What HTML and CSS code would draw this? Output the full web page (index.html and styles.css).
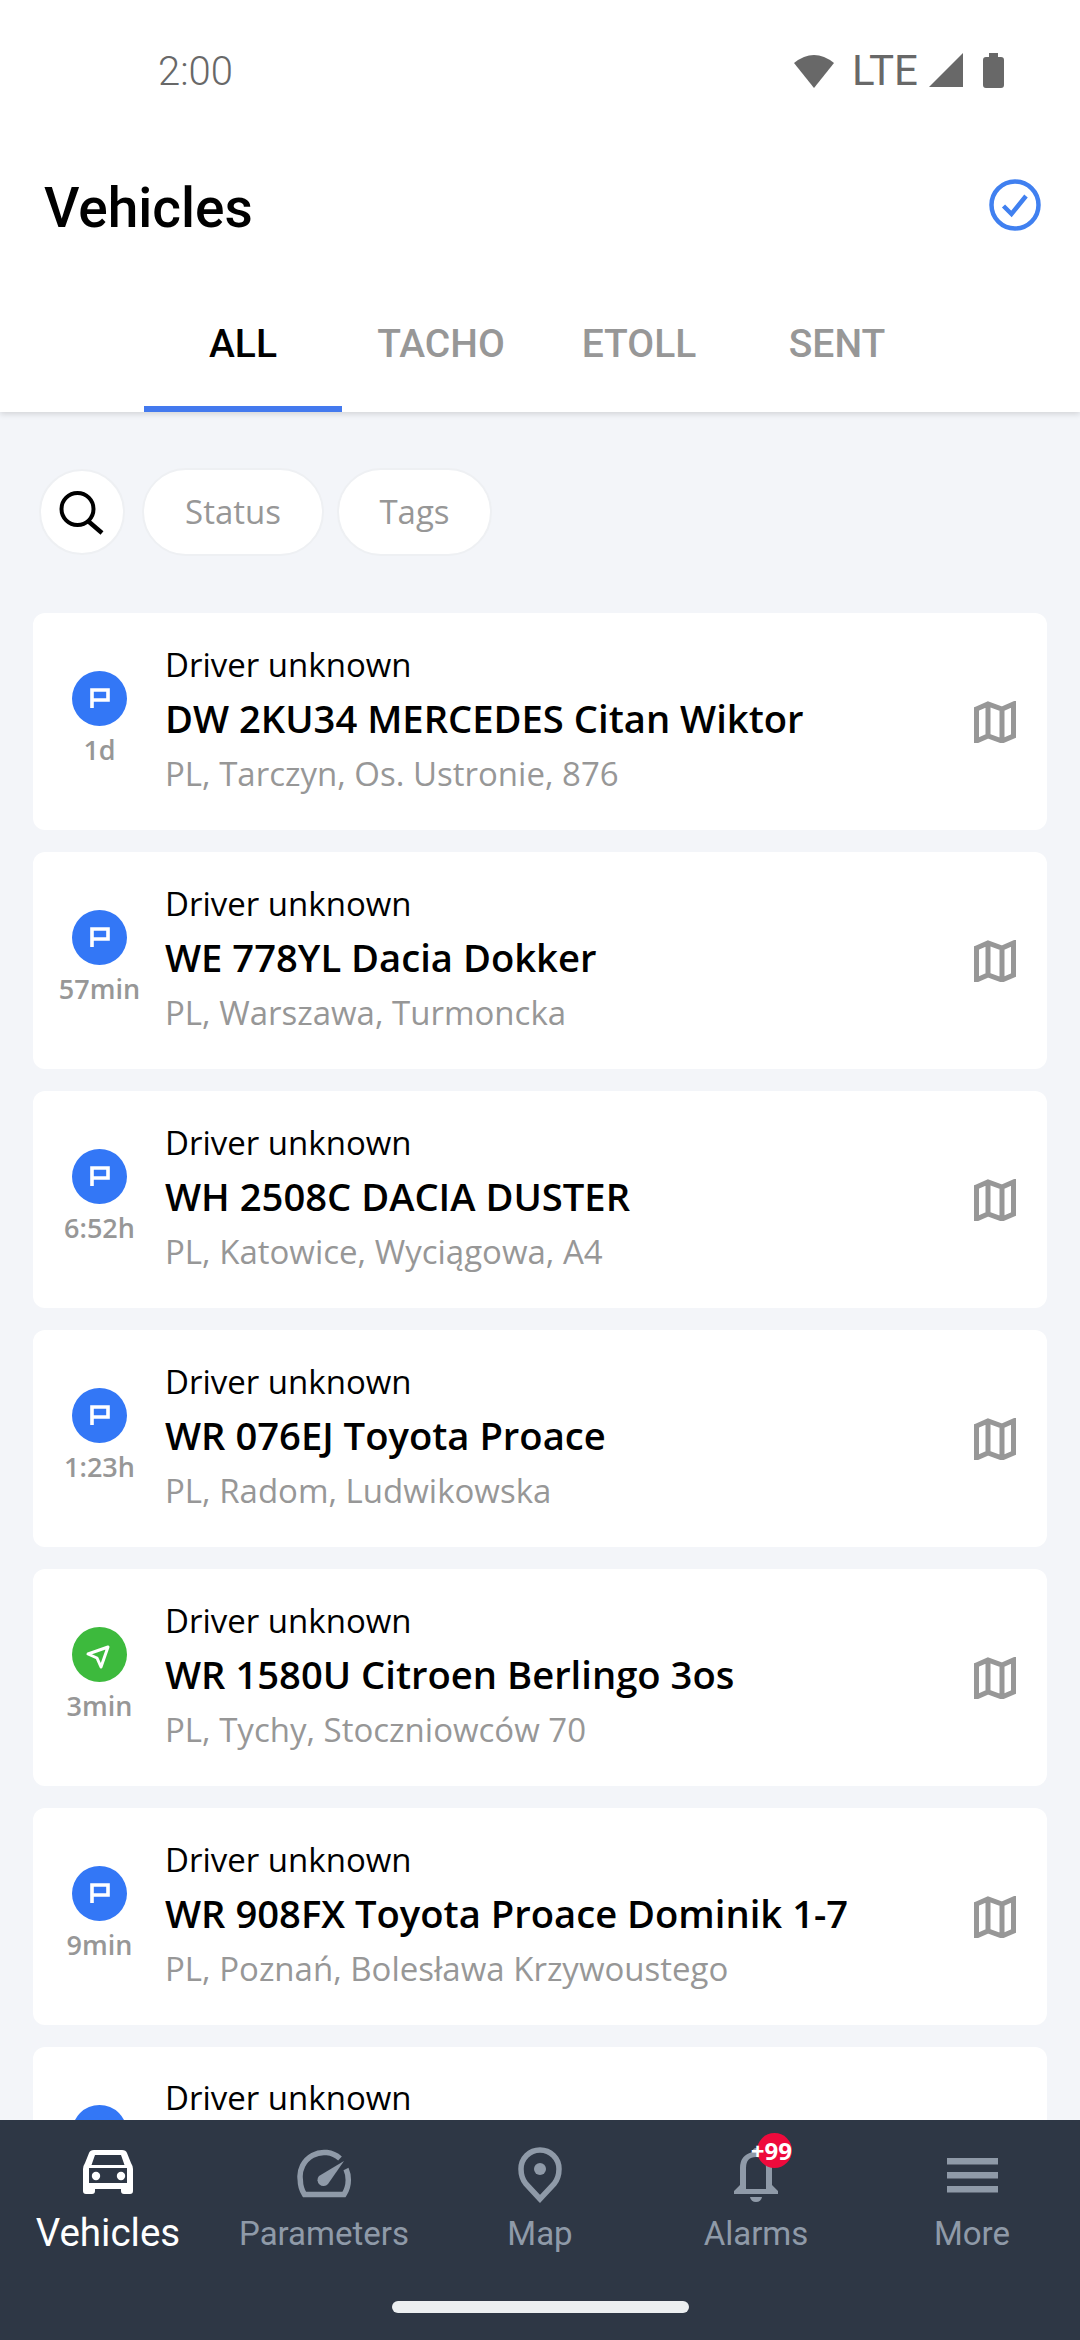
FILE: index.html
```html
<!DOCTYPE html>
<html lang="en">
<head>
  <meta charset="UTF-8" />
  <meta name="viewport" content="width=device-width, initial-scale=1.0"/>
  <title>Vehicles</title>
  <link rel="stylesheet" href="styles.css">
</head>
<body>
  <svg class="defs" width="0" height="0">
    <symbol id="map" viewBox="0 0 42 42">
      <path d="M2.5 8 L14 3 L28 8 L39.5 3 V35 L28 40 L14 35 L2.5 40 Z M14 3 V35 M28 8 V40" fill="none" stroke="#979797" stroke-width="5" stroke-linejoin="miter"/>
    </symbol>
    <symbol id="parked" viewBox="0 0 55 55">
      <circle cx="27.5" cy="27.5" r="27.5" fill="#3377f6"/>
      <path d="M20 37 V19 H36 V29 H20" fill="none" stroke="#fff" stroke-width="3.6"/>
    </symbol>
    <symbol id="moving" viewBox="0 0 55 55">
      <circle cx="27.5" cy="27.5" r="27.5" fill="#3dba3d"/>
      <path d="M16 27 L36 20 L29 40 L25 31 Z" fill="none" stroke="#fff" stroke-width="3" stroke-linejoin="round"/>
    </symbol>
  </svg>

  <div class="app">
    <div class="statusbar">
      <span class="time">2:00</span>
      <div class="status-icons">
        <svg width="42" height="35" viewBox="0 0 42 35"><path d="M1 10 Q21 -6 41 10 L21 35 Z" fill="#686868"/></svg>
        <span class="lte">LTE</span>
        <svg width="34" height="34" viewBox="0 0 34 34"><path d="M34 0 V34 H0 Z" fill="#686868"/></svg>
        <svg class="battery" width="21" height="35" viewBox="0 0 21 35"><path d="M6 0 H15 V4 H18 Q21 4 21 7 V32 Q21 35 18 35 H3 Q0 35 0 32 V7 Q0 4 3 4 H6 Z" fill="#686868"/></svg>
      </div>
    </div>

    <header class="title-row">
      <h1>Vehicles</h1>
      <svg class="select-all" width="52" height="52" viewBox="0 0 52 52">
        <circle cx="26" cy="26" r="23.5" fill="none" stroke="#4080f0" stroke-width="4.5"/>
        <path d="M14.5 27 L22.5 35 L37 17" fill="none" stroke="#4080f0" stroke-width="4.5"/>
      </svg>
    </header>

    <nav class="tabs">
      <div class="tab active">ALL</div>
      <div class="tab">TACHO</div>
      <div class="tab">ETOLL</div>
      <div class="tab">SENT</div>
    </nav>

    <main class="content">
      <div class="filters">
        <div class="search">
          <svg width="46" height="46" viewBox="0 0 46 46">
            <circle cx="18.5" cy="20" r="16" fill="none" stroke="#000" stroke-width="4"/>
            <path d="M29 32 L43 44" stroke="#000" stroke-width="4.5"/>
          </svg>
        </div>
        <div class="chip status-chip">Status</div>
        <div class="chip tags-chip">Tags</div>
      </div>

      <div class="card">
        <div class="state"><svg width="55" height="55"><use href="#parked"/></svg><span>1d</span></div>
        <div class="info">
          <div class="driver">Driver unknown</div>
          <div class="name">DW 2KU34 MERCEDES Citan Wiktor</div>
          <div class="address">PL, Tarczyn, Os. Ustronie, 876</div>
        </div>
        <svg class="map-icon" width="42" height="42"><use href="#map"/></svg>
      </div>

      <div class="card">
        <div class="state"><svg width="55" height="55"><use href="#parked"/></svg><span>57min</span></div>
        <div class="info">
          <div class="driver">Driver unknown</div>
          <div class="name">WE 778YL Dacia Dokker</div>
          <div class="address">PL, Warszawa, Turmoncka</div>
        </div>
        <svg class="map-icon" width="42" height="42"><use href="#map"/></svg>
      </div>

      <div class="card">
        <div class="state"><svg width="55" height="55"><use href="#parked"/></svg><span>6:52h</span></div>
        <div class="info">
          <div class="driver">Driver unknown</div>
          <div class="name">WH 2508C DACIA DUSTER</div>
          <div class="address">PL, Katowice, Wyciągowa, A4</div>
        </div>
        <svg class="map-icon" width="42" height="42"><use href="#map"/></svg>
      </div>

      <div class="card">
        <div class="state"><svg width="55" height="55"><use href="#parked"/></svg><span>1:23h</span></div>
        <div class="info">
          <div class="driver">Driver unknown</div>
          <div class="name">WR 076EJ Toyota Proace</div>
          <div class="address">PL, Radom, Ludwikowska</div>
        </div>
        <svg class="map-icon" width="42" height="42"><use href="#map"/></svg>
      </div>

      <div class="card">
        <div class="state"><svg width="55" height="55"><use href="#moving"/></svg><span>3min</span></div>
        <div class="info">
          <div class="driver">Driver unknown</div>
          <div class="name">WR 1580U Citroen Berlingo 3os</div>
          <div class="address">PL, Tychy, Stoczniowców 70</div>
        </div>
        <svg class="map-icon" width="42" height="42"><use href="#map"/></svg>
      </div>

      <div class="card">
        <div class="state"><svg width="55" height="55"><use href="#parked"/></svg><span>9min</span></div>
        <div class="info">
          <div class="driver">Driver unknown</div>
          <div class="name">WR 908FX Toyota Proace Dominik 1-7</div>
          <div class="address">PL, Poznań, Bolesława Krzywoustego</div>
        </div>
        <svg class="map-icon" width="42" height="42"><use href="#map"/></svg>
      </div>

      <div class="card">
        <div class="state"><svg width="55" height="55"><use href="#parked"/></svg><span></span></div>
        <div class="info last-info">
          <div class="driver">Driver unknown</div>
        </div>
      </div>
    </main>

    <footer class="bottom-nav">
      <div class="nav-items">
        <div class="nav-item active">
          <div class="nav-icon">
            <svg width="50" height="60" viewBox="0 -5 50 60"><path fill-rule="evenodd" d="M11 0 H39 Q43 0 44 3 L48 13 Q50 16 50 19 V41 Q50 44 47 44 H41 Q38 44 38 41 V39 H12 V41 Q12 44 9 44 H3 Q0 44 0 41 V19 Q0 16 2 13 L6 3 Q7 0 11 0 Z M12 5 L8.5 15 H41.5 L38 5 Z M6 18 V33 H44 V18 Z" fill="#fff"/><circle cx="13" cy="26" r="4.2" fill="#fff"/><circle cx="38" cy="26" r="4.2" fill="#fff"/></svg>
          </div>
          <span>Vehicles</span>
        </div>
        <div class="nav-item">
          <div class="nav-icon">
            <svg width="55" height="60" viewBox="0 -8 55 60"><path d="M43 5.5 A24 24 0 0 0 3.3 27 Q3.3 35 7.5 41.5 H47 Q51.3 35 51.3 27 Q51.3 21 49 16" fill="none" stroke="#8f9aa8" stroke-width="5.5"/><path d="M47 8 L31 31 A6 6 0 1 1 22 23 Z" fill="#8f9aa8"/></svg>
          </div>
          <span>Parameters</span>
        </div>
        <div class="nav-item">
          <div class="nav-icon">
            <svg width="44" height="60" viewBox="0 -2 44 60"><path d="M22 52 L8 37 Q3 31 3 22 A19 19 0 0 1 41 22 Q41 31 36 37 Z" fill="none" stroke="#8f9aa8" stroke-width="5.5"/><circle cx="22" cy="22" r="6" fill="#8f9aa8"/></svg>
          </div>
          <span>Map</span>
        </div>
        <div class="nav-item">
          <div class="nav-icon">
            <svg width="44" height="60" viewBox="0 -3 44 60"><path d="M22 0 A3.5 3.5 0 0 1 25.5 4 Q38 7 38 20 V37 L44 43 V46 H0 V43 L6 37 V20 Q6 7 18.5 4 A3.5 3.5 0 0 1 22 0 Z M12 41 H32 V20 Q32 9 22 9 Q12 9 12 20 Z" fill-rule="evenodd" fill="#8f9aa8"/><path d="M16 49 H28 Q27 54 22 54 Q17 54 16 49 Z" fill="#8f9aa8"/></svg>
            <span class="badge">+99</span>
          </div>
          <span>Alarms</span>
        </div>
        <div class="nav-item">
          <div class="nav-icon">
            <svg width="51" height="60" viewBox="0 -13 51 60"><path d="M0 0 H51 V6.5 H0 Z M0 14 H51 V20.5 H0 Z M0 28 H51 V34.5 H0 Z" fill="#8f9aa8"/></svg>
          </div>
          <span>More</span>
        </div>
      </div>
      <div class="home-indicator"></div>
    </footer>
  </div>
</body>
</html>
```
FILE: styles.css
```css
* {
  box-sizing: border-box;
}
body {
  margin: 0;
  background: #fff;
  font-family: "Open Sans", sans-serif;
}
.defs {
  position: absolute;
}
.app {
  width: 1080px;
  height: 2340px;
  display: flex;
  flex-direction: column;
  overflow: hidden;
  background: #f3f5f9;
}

/* status bar */
.statusbar {
  height: 96px;
  flex: none;
  display: flex;
  align-items: center;
  justify-content: space-between;
  padding: 0 76px 0 158px;
  background: #fff;
  font-family: Roboto, sans-serif;
  color: #686868;
  position: relative;
  z-index: 1;
}
.time {
  font-size: 40px;
  font-weight: 300;
  margin-top: 48px;
  line-height: 50px;
}
.status-icons {
  display: flex;
  align-items: center;
  margin-top: 44px;
}
.lte {
  font-size: 42px;
  font-weight: 400;
  line-height: 35px;
  margin: 0 11px 0 17px;
}
.battery {
  margin-left: 20px;
}

/* header */
.title-row {
  height: 220px;
  flex: none;
  display: flex;
  align-items: center;
  justify-content: space-between;
  padding: 0 39px 0 44px;
  background: #fff;
  position: relative;
  z-index: 1;
}
h1 {
  margin: 3px 0 0;
  font-family: Roboto, sans-serif;
  font-size: 55px;
  font-weight: 500;
  color: #000;
}
.select-all {
  margin-top: -2px;
}
.tabs {
  height: 96px;
  flex: none;
  display: flex;
  justify-content: center;
  background: #fff;
  box-shadow: 0 2px 6px rgba(0,0,0,0.14);
  position: relative;
}
.tab {
  width: 198px;
  padding-top: 4px;
  text-align: center;
  font-family: Roboto, sans-serif;
  font-size: 39px;
  font-weight: 500;
  line-height: 48px;
  color: #979797;
}
.tab.active {
  color: #000;
  border-bottom: 6px solid #4379ee;
}

/* list */
.content {
  flex: 1;
  min-height: 0;
  overflow: hidden;
  padding: 56px 33px 0;
}
.filters {
  display: flex;
  align-items: center;
  gap: 15px;
  margin: 0 0 58px 6px;
  height: 87px;
}
.search {
  width: 86px;
  height: 86px;
  margin-right: 2px;
  border-radius: 50%;
  background: #fff;
  border: 2px solid #eef0f3;
  display: flex;
  align-items: center;
  justify-content: center;
}
.chip {
  height: 88px;
  border-radius: 44px;
  background: #fff;
  border: 2px solid #eef0f3;
  display: flex;
  align-items: center;
  justify-content: center;
  font-size: 33px;
  color: #979797;
}
.status-chip {
  width: 182px;
}
.tags-chip {
  width: 155px;
  margin-left: -2px;
}
.card {
  height: 217px;
  margin-bottom: 22px;
  background: #fff;
  border-radius: 12px;
  display: flex;
  align-items: center;
  padding: 0 31px 0 0;
}
.state {
  width: 132px;
  flex: none;
  display: flex;
  flex-direction: column;
  align-items: center;
  padding: 0 0 4px 1px;
  font-size: 27px;
  font-weight: 600;
  color: #979797;
  line-height: 36px;
}
.state svg {
  margin-bottom: 6px;
}
.state span {
  min-height: 36px;
}
.info {
  flex: 1;
  min-width: 0;
  padding-bottom: 1px;
}
.last-info {
  align-self: flex-start;
  padding-top: 29px;
}
.driver {
  font-size: 33px;
  line-height: 44px;
  color: #000;
}
.name {
  font-size: 38.2px;
  font-weight: 600;
  line-height: 62px;
  color: #000;
}
.address {
  font-size: 33px;
  line-height: 50px;
  color: #979797;
}
.map-icon {
  flex: none;
}

/* bottom nav */
.bottom-nav {
  height: 220px;
  flex: none;
  background: #2e3745;
  font-family: Roboto, sans-serif;
  position: relative;
  padding-top: 25px;
}
.nav-items {
  display: grid;
  grid-template-columns: repeat(5, 216px);
}
.nav-item {
  height: 156px;
  display: flex;
  flex-direction: column;
  align-items: center;
  font-size: 33px;
  line-height: 50px;
  color: #8f9aa8;
}
.nav-icon {
  position: relative;
  height: 60px;
  margin-bottom: 4px;
}
.nav-icon svg {
  display: block;
}
.nav-item.active {
  color: #fff;
  font-size: 38.5px;
}
.nav-item.active .nav-icon {
  margin-bottom: 3px;
}
.badge {
  position: absolute;
  left: 23px;
  top: -12px;
  width: 35px;
  height: 35px;
  border-radius: 50%;
  background: #ee0a3c;
  color: #fff;
  font-family: "Open Sans", sans-serif;
  font-size: 24px;
  font-weight: 700;
  line-height: 35px;
  white-space: nowrap;
  display: flex;
  justify-content: flex-end;
}
.home-indicator {
  width: 297px;
  height: 12px;
  margin: 0 auto;
  border-radius: 6px;
  background: #eceff1;
}
```
